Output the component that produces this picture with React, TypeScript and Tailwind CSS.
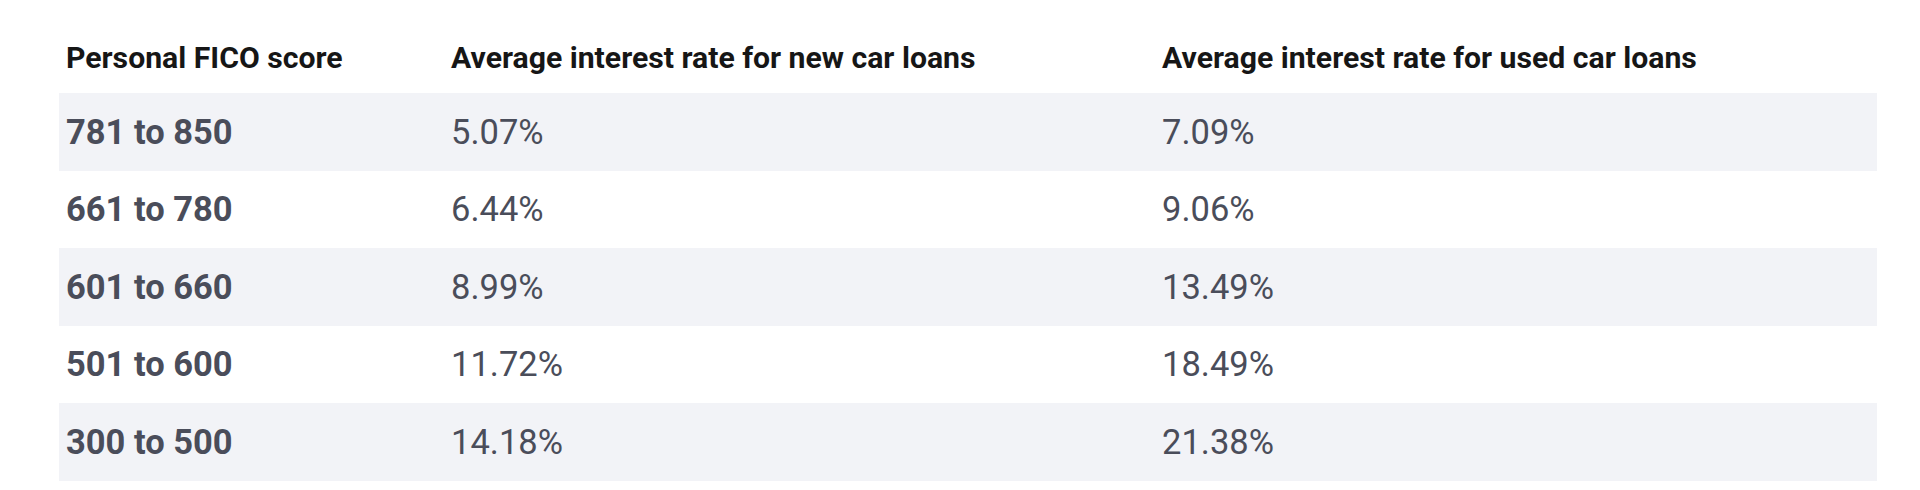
import React from 'react';

const rows = [
  { score: '781 to 850', newCar: '5.07%', usedCar: '7.09%' },
  { score: '661 to 780', newCar: '6.44%', usedCar: '9.06%' },
  { score: '601 to 660', newCar: '8.99%', usedCar: '13.49%' },
  { score: '501 to 600', newCar: '11.72%', usedCar: '18.49%' },
  { score: '300 to 500', newCar: '14.18%', usedCar: '21.38%' },
];

export default function App() {
  return (
    <div className="h-[490px] w-full bg-white font-['Roboto',sans-serif] pt-[24px] px-[43px]">
      <div className="w-[1818px] ml-[16px]">
        {/* Header */}
        <div className="grid grid-cols-[385px_709px_1fr] h-[69px] items-center text-[30.2px] font-bold leading-none text-[#161616]">
          <div className="pl-[7px]">Personal FICO score</div>
          <div className="pl-[7px]">Average interest rate for new car loans</div>
          <div className="pl-[9px]">Average interest rate for used car loans</div>
        </div>

        {/* Rows */}
        {rows.map((row, i) => (
          <div
            key={row.score}
            className={`grid grid-cols-[385px_709px_1fr] h-[77.5px] items-center text-[34.5px] leading-none text-[#4a4d5a] ${
              i % 2 === 0 ? 'bg-[#f2f3f7]' : 'bg-white'
            }`}
          >
            <div className="pl-[7px] font-bold">{row.score}</div>
            <div className="pl-[7px]">{row.newCar}</div>
            <div className="pl-[9px]">{row.usedCar}</div>
          </div>
        ))}
      </div>
    </div>
  );
}
